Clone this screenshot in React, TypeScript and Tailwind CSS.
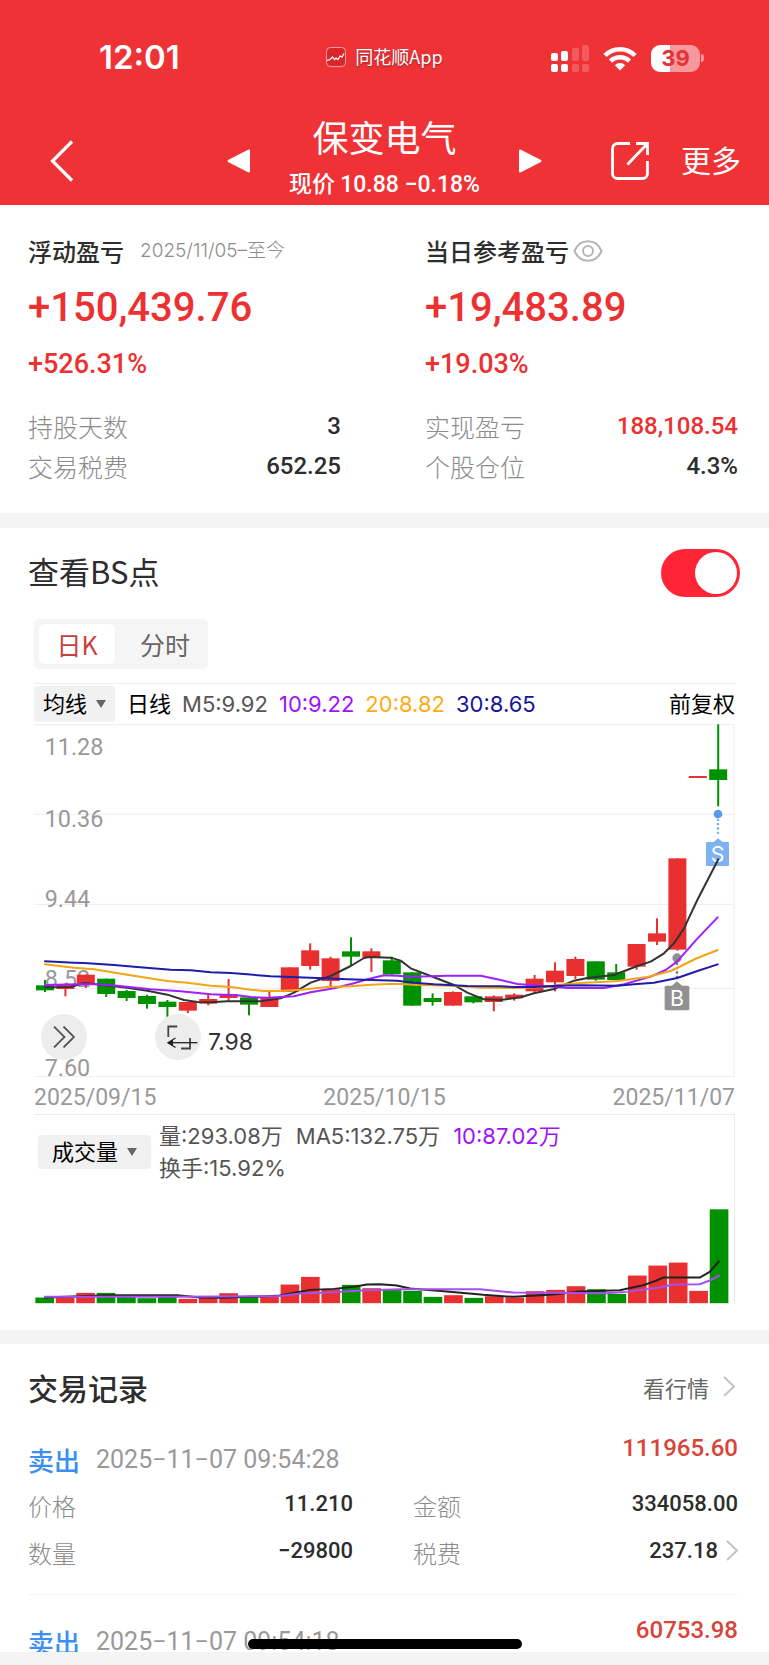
import React, { useState } from 'react';
import clsx from 'clsx';

type Candle = {
  up: boolean;
  body: [number, number];
  wick: [number, number];
  volume: number;
};

type TradeField = {
  label: string;
  value: string;
  link?: boolean;
};

type TradeRecord = {
  side: string;
  time: string;
  profit: string;
  fields: TradeField[];
};

const c = (
  up: boolean,
  top: number,
  bottom: number,
  high: number,
  low: number,
  volume: number
): Candle => ({ up, body: [top, bottom], wick: [high, low], volume });

// Body and wick are chart y values, volume is the bar height
const candles: Candle[] = [
  c(false, 796, 811, 780, 816, 17),
  c(true, 795, 807, 790, 829, 17),
  c(true, 764, 791, 764, 804, 31),
  c(false, 776, 822, 776, 831, 31),
  c(false, 813, 834, 810, 843, 19),
  c(false, 828, 852, 824, 866, 15),
  c(false, 845, 861, 840, 899, 19),
  c(true, 846, 872, 846, 879, 13),
  c(true, 837, 851, 825, 856, 17),
  c(true, 822, 834, 777, 843, 30),
  c(false, 832, 854, 832, 886, 20),
  c(true, 834, 861, 814, 861, 19),
  c(true, 742, 815, 742, 815, 56),
  c(true, 691, 738, 670, 749, 79),
  c(true, 715, 783, 710, 798, 42),
  c(false, 694, 710, 652, 738, 55),
  c(true, 694, 713, 685, 756, 45),
  c(false, 721, 763, 710, 768, 41),
  c(false, 757, 857, 757, 857, 37),
  c(false, 834, 846, 820, 857, 19),
  c(true, 816, 857, 814, 857, 24),
  c(false, 829, 847, 829, 850, 16),
  c(true, 829, 846, 826, 874, 21),
  c(true, 824, 835, 820, 842, 17),
  c(true, 776, 814, 765, 819, 36),
  c(true, 752, 787, 727, 814, 40),
  c(true, 717, 768, 710, 777, 51),
  c(false, 724, 779, 724, 782, 42),
  c(false, 757, 780, 732, 780, 28),
  c(true, 672, 740, 672, 749, 83),
  c(true, 640, 665, 595, 675, 113),
  c(true, 415, 689, 415, 692, 122),
  c(true, 168, 174, 168, 174, 37),
  c(false, 148, 180, 13, 259, 282),
];

const priceLines = {
  ma30: '33,724 120,728 150,729 240,735 300,740 410,749 470,751 530,757 590,759 640,763 710,769 790,772 870,775 940,778 1038,781 1090,782 1140,788 1200,793 1300,798 1400,799 1440,801 1500,801 1570,797 1640,796 1750,797 1800,793 1860,788 1930,774 1990,753 2051,733',
  ma20: '33,733 120,743 180,748 270,763 400,783 460,788 530,797 590,801 650,809 690,813 730,813 800,809 880,801 950,799 1000,795 1060,792 1100,792 1150,795 1260,797 1340,803 1440,804 1540,801 1570,795 1640,789 1700,786 1750,783 1840,771 1910,753 1990,714 2051,690',
  ma10: '33,795 130,793 190,793 250,797 350,808 440,814 530,823 610,826 650,831 700,833 780,829 830,817 900,805 960,790 1000,778 1050,766 1090,767 1130,770 1190,769 1240,767 1340,767 1400,780 1450,792 1530,798 1600,804 1710,804 1770,793 1850,770 1895,750 1929,725 1990,656 2051,592',
  ma5: '33,802 110,801 150,789 200,794 280,803 340,812 400,824 450,840 490,846 530,847 580,844 680,844 740,835 780,818 830,788 890,768 950,738 990,714 1005,711 1070,713 1100,722 1130,745 1190,768 1260,795 1300,818 1350,838 1400,840 1460,832 1500,820 1560,807 1620,782 1660,774 1740,765 1810,738 1850,725 1890,700 1920,670 1950,625 1990,540 2053,418',
};

const volumeLines = {
  ma5: '33,652 200,646 250,645 430,645 500,652 560,653 650,650 730,647 770,640 830,629 900,626 960,620 1000,613 1040,612 1090,616 1130,625 1240,634 1350,644 1440,650 1560,643 1640,634 1760,630 1830,615 1865,603 1890,592 2000,592 2030,575 2058,543',
  ma10: '33,650 430,650 730,648 800,640 900,636 1000,630 1100,627 1340,627 1400,633 1440,637 1720,639 1780,635 1880,622 1920,613 2000,612 2030,601 2058,586',
};

const axisLabels = [
  { text: '11.28', y: 105 },
  { text: '10.36', y: 321 },
  { text: '9.44', y: 561 },
  { text: '8.52', y: 801 },
  { text: '7.60', y: 1069 },
];

const records: TradeRecord[] = [
  {
    side: '卖出',
    time: '2025−11−07 09:54:28',
    profit: '111965.60',
    fields: [
      { label: '价格', value: '11.210' },
      { label: '金额', value: '334058.00' },
      { label: '数量', value: '−29800' },
      { label: '税费', value: '237.18', link: true },
    ],
  },
  {
    side: '卖出',
    time: '2025−11−07 09:54:18',
    profit: '60753.98',
    fields: [],
  },
];

const UP = '#e93030';
const DOWN = '#009100';

const StatusBar: React.FC = () => (
  <div className="grid h-[116px] grid-cols-[1fr_auto_1fr] items-center text-white">
    <span className="pl-[99px] font-[Inter,sans-serif] text-[33px] font-semibold">12:01</span>
    <div className="flex items-center gap-[9px] pb-[3px] text-[18px] [text-shadow:0_1px_2px_rgba(0,0,0,0.4)]">
      <svg viewBox="0 0 20 20" className="h-5 w-5" fill="none" stroke="#fff">
        <rect x="0.5" y="0.5" width="19" height="19" rx="4" strokeOpacity="0.55" fill="#d9262b" />
        <path d="M1 13.5l3-1 2.5-2.5 2 2.5 1.5-1.5 2 1.5 2-3.5 2 1 2-3.5" strokeWidth="1.2" />
      </svg>
      <span>同花顺App</span>
    </div>
    <div className="flex items-center justify-end gap-[14px] pr-[65px]">
      <svg viewBox="0 0 38 27" className="h-[27px] w-[38px]" fill="#fff">
        <rect x="0" y="8" width="7" height="8" rx="2" />
        <rect x="10" y="6" width="7" height="10" rx="2" />
        <rect x="0" y="19" width="7" height="8" rx="2" />
        <rect x="10" y="19" width="7" height="8" rx="2" />
        <g opacity="0.2">
          <rect x="21" y="3" width="7" height="13" rx="2" />
          <rect x="31" y="0" width="7" height="16" rx="2" />
          <rect x="21" y="19" width="7" height="8" rx="2" />
          <rect x="31" y="19" width="7" height="8" rx="2" />
        </g>
      </svg>
      <svg viewBox="0 0 34 25" className="h-[25px] w-[34px]" fill="none" stroke="#fff" strokeWidth="4.6">
        <path d="M2 9.5a21 21 0 0 1 30 0" />
        <path d="M7.5 15.2a13.5 13.5 0 0 1 19 0" />
        <path d="M17 24.5l-5.2-5.3a7.4 7.4 0 0 1 10.4 0z" fill="#fff" stroke="none" />
      </svg>
      <div className="flex items-center gap-[1px]">
        <div className="h-[27px] w-[49px] rounded-[9px] bg-linear-to-r from-white from-39% to-white/50 to-39% text-center font-[Inter,sans-serif] text-[22px] leading-[27px] font-bold text-[#e23338]">
          39
        </div>
        <div className="h-2 w-[3px] rounded-r-full bg-white/50" />
      </div>
    </div>
  </div>
);

const NavBar: React.FC = () => (
  <nav className="grid h-[89px] grid-cols-[1fr_auto_1fr] items-center text-white">
    <button aria-label="返回" className="pl-[50px]">
      <svg viewBox="0 0 24 42" className="h-[42px] w-6" fill="none" stroke="#fff" strokeWidth="3.2">
        <path d="M22 1.5L2.5 21 22 40.5" />
      </svg>
    </button>
    <div className="flex w-[316px] items-center justify-between">
      <button aria-label="上一只">
        <svg viewBox="0 0 23 24" className="h-6 w-[23px]" fill="#fff" stroke="#fff" strokeWidth="2" strokeLinejoin="round">
          <path d="M22 1.5v21L1.5 12z" />
        </svg>
      </button>
      <div className="text-center">
        <h1 className="text-[36px] leading-10">保变电气</h1>
        <p className="pt-[5px] text-[23px] leading-[43px] font-medium">
          现价 <span className="font-[Roboto,sans-serif]">10.88 −0.18%</span>
        </p>
      </div>
      <button aria-label="下一只">
        <svg viewBox="0 0 23 24" className="h-6 w-[23px]" fill="#fff" stroke="#fff" strokeWidth="2" strokeLinejoin="round">
          <path d="M1 1.5v21L21.5 12z" />
        </svg>
      </button>
    </div>
    <div className="flex items-center justify-end gap-8 pr-7">
      <button aria-label="分享">
        <svg viewBox="0 0 38 38" className="h-[38px] w-[38px]" fill="none" stroke="#fff" strokeWidth="2.8">
          <path d="M19 1.5H6.5a5 5 0 0 0-5 5v25a5 5 0 0 0 5 5h25a5 5 0 0 0 5-5V19" />
          <path d="M25 1.5h11.5V13M36 2L16.5 22.5" />
        </svg>
      </button>
      <button className="pb-1 text-[30px]">更多</button>
    </div>
  </nav>
);

const ProfitColumn: React.FC<{
  title: React.ReactNode;
  total: string;
  percent: string;
  rows: { label: string; value: string; red?: boolean }[];
}> = ({ title, total, percent, rows }) => (
  <div>
    <div className="flex items-center text-[24px] leading-[34px] font-medium text-[#2d2d2d]">{title}</div>
    <p className="mt-4 font-[Roboto,sans-serif] text-[40px] leading-[48px] font-medium text-[#eb3131]">{total}</p>
    <p className="mt-[14px] font-[Roboto,sans-serif] text-[27px] leading-9 font-medium text-[#eb3131]">{percent}</p>
    <dl className="mt-6 leading-10">
      {rows.map((row) => (
        <div key={row.label} className="flex justify-between">
          <dt className="text-[25px] font-light text-[#8c8c8c]">{row.label}</dt>
          <dd
            className={clsx(
              'font-[Roboto,sans-serif] text-[24px] font-medium',
              row.red ? 'text-[#eb3131]' : 'text-[#2d2d2d]'
            )}
          >
            {row.value}
          </dd>
        </div>
      ))}
    </dl>
  </div>
);

const ProfitSummary: React.FC = () => (
  <section className="grid grid-cols-2 gap-[84px] pt-[29px] pr-[31px] pb-[27px] pl-7">
    <ProfitColumn
      title={
        <>
          浮动盈亏
          <span className="ml-4 font-[Inter,'Noto_Sans_CJK_SC',sans-serif] text-[19px] font-light text-[#8c8c8c]">
            2025/11/05–至今
          </span>
        </>
      }
      total="+150,439.76"
      percent="+526.31%"
      rows={[
        { label: '持股天数', value: '3' },
        { label: '交易税费', value: '652.25' },
      ]}
    />
    <ProfitColumn
      title={
        <>
          当日参考盈亏
          <button aria-label="隐藏金额" className="ml-1">
            <svg viewBox="0 0 30 22" className="h-[22px] w-[30px]" fill="none" stroke="#b5b5b5" strokeWidth="2">
              <path d="M1.5 11C4 5 9 1.3 15 1.3S26 5 28.5 11C26 17 21 20.7 15 20.7S4 17 1.5 11z" />
              <circle cx="15" cy="11" r="5" />
            </svg>
          </button>
        </>
      }
      total="+19,483.89"
      percent="+19.03%"
      rows={[
        { label: '实现盈亏', value: '188,108.54', red: true },
        { label: '个股仓位', value: '4.3%' },
      ]}
    />
  </section>
);

const Caret: React.FC = () => (
  <svg viewBox="0 0 10 8" className="h-2 w-[10px]" fill="#666">
    <path d="M0 0h10L5 8z" />
  </svg>
);

const PriceChart: React.FC = () => (
  <svg viewBox="0 12 2103 1060" className="block w-full">
    <g stroke="#ececec" strokeWidth="3">
      {[14, 283, 553, 805, 1070].map((y) => (
        <line key={y} x1="0" x2="2100" y1={y} y2={y} />
      ))}
      <line x1="2100" x2="2100" y1="12" y2="1070" />
    </g>
    <g fill="#999" fontSize="70" fontFamily="Roboto, sans-serif">
      {axisLabels.map((label) => (
        <text key={label.text} x="32" y={label.y}>
          {label.text}
        </text>
      ))}
    </g>
    {candles.map((candle, i) => {
      const x = 33 + i * 61.2;
      const color = candle.up ? UP : DOWN;
      return (
        <g key={i} fill={color}>
          <rect x={x - 3} y={candle.wick[0]} width="6" height={candle.wick[1] - candle.wick[0]} />
          <rect x={x - 27} y={candle.body[0]} width="54" height={candle.body[1] - candle.body[0]} />
        </g>
      );
    })}
    <g fill="#919191">
      <circle cx="1929" cy="714" r="14" />
      <path d="M1929 728v50" stroke="#777" strokeWidth="7" strokeDasharray="7 6" />
      <path d="M1913 798l16-14 16 14z" />
      <rect x="1892" y="797" width="74" height="74" rx="5" />
    </g>
    <g fill="#7fb2f3">
      <circle cx="2052" cy="282" r="13" fill="#559aef" />
      <path d="M2052 296v48" stroke="#7fb2f3" strokeWidth="7" strokeDasharray="7 6" />
      <path d="M2036 368l16-13 16 13z" />
      <rect x="2016" y="366" width="69" height="72" rx="3" />
    </g>
    <g fill="#fff" fontSize="64" fontFamily="Inter, sans-serif" textAnchor="middle">
      <text x="1929" y="858">B</text>
      <text x="2051" y="426">S</text>
    </g>
    <g fill="none" strokeWidth="6" strokeLinejoin="round" strokeLinecap="round">
      <polyline points={priceLines.ma5} stroke="#333" />
      <polyline points={priceLines.ma10} stroke="#a020ff" />
      <polyline points={priceLines.ma20} stroke="#f5a414" />
      <polyline points={priceLines.ma30} stroke="#1d1da8" />
    </g>
    <text x="522" y="990" fill="#333" fontSize="69" fontFamily="Inter, sans-serif">
      7.98
    </text>
  </svg>
);

const VolumeChart: React.FC = () => (
  <svg viewBox="0 380 2103 289" className="block w-full">
    {candles.map((candle, i) => (
      <rect
        key={i}
        x={4 + i * 61.4}
        y={669 - candle.volume}
        width="56"
        height={candle.volume}
        fill={candle.up ? UP : DOWN}
      />
    ))}
    <g fill="none" strokeWidth="6" strokeLinejoin="round" strokeLinecap="round">
      <polyline points={volumeLines.ma5} stroke="#222" />
      <polyline points={volumeLines.ma10} stroke="#a64ff0" />
    </g>
  </svg>
);

const ChartSection: React.FC = () => {
  const [showPoints, setShowPoints] = useState(true);
  const [tab, setTab] = useState('day');

  const tabClass = (name: string) =>
    clsx('rounded-md text-[25px]', tab === name ? 'bg-white text-[#c9403a]' : 'text-[#666]');

  return (
    <section className="pb-[26px]">
      <label className="flex items-center justify-between pt-[21px] pr-[29px] pl-7 text-[31px] text-[#2d2d2d]">
        <span className="pb-1 leading-10">查看BS点</span>
        <input
          type="checkbox"
          checked={showPoints}
          onChange={(e) => setShowPoints(e.target.checked)}
          className="flex h-12 w-[79px] appearance-none items-center justify-start rounded-full bg-gray-300 px-[3px] before:block before:h-[42px] before:w-[42px] before:rounded-full before:bg-white before:content-[''] checked:justify-end checked:bg-[#ff2436]"
        />
      </label>

      <div className="px-[34px]">
        <div className="mt-[22px] grid h-[50px] w-[174px] grid-cols-[76px_1fr] gap-3 rounded-md bg-[#f5f5f5] p-[5px] leading-9">
          <button className={tabClass('day')} onClick={() => setTab('day')}>
            日K
          </button>
          <button className={tabClass('time')} onClick={() => setTab('time')}>
            分时
          </button>
        </div>

        <div className="mt-[14px] flex h-[41px] items-center border-t border-[#efefef] font-[Inter,'Noto_Sans_CJK_SC',sans-serif] text-[22px] text-black">
          <button className="flex h-9 w-[81px] items-center justify-center gap-[9px] rounded-[3px] bg-[#f1f1f1]">
            均线
            <Caret />
          </button>
          <span className="ml-3">日线</span>
          <div className="ml-[11px] flex gap-[11px]">
            <span className="text-[#555]">M5:9.92</span>
            <span className="text-[#a010ff]">10:9.22</span>
            <span className="text-[#ffac14]">20:8.82</span>
            <span className="text-[#14149c]">30:8.65</span>
          </div>
          <span className="ml-auto">前复权</span>
        </div>

        <div className="relative">
          <PriceChart />
          <button
            aria-label="展开"
            className="absolute bottom-[17px] left-[7px] flex h-[46px] w-[46px] items-center justify-center rounded-full bg-[#ededed]"
          >
            <svg viewBox="0 0 22 22" className="h-[22px] w-[22px]" fill="none" stroke="#555" strokeWidth="1.8">
              <path d="M1 0.5L11.5 11 1 21.5M10.5 0.5L21 11 10.5 21.5" />
            </svg>
          </button>
          <button
            aria-label="全屏"
            className="absolute bottom-[17px] left-[121px] flex h-[46px] w-[46px] items-center justify-center rounded-full bg-[#ededed]"
          >
            <svg viewBox="0 0 46 46" className="h-[46px] w-[46px]" fill="none" stroke="#444" strokeWidth="1.8">
              <path d="M13.3 23V12.5h9M26 34.5h9V24" />
              <path d="M13 28.7h29.5" stroke="#222" strokeWidth="1.3" />
              <path d="M20.5 24L13 28.7l7.5 4.8" stroke="#222" strokeWidth="1.3" />
              <path d="M13 28.7l5-3v6z" fill="#222" stroke="none" />
            </svg>
          </button>
        </div>
        <div className="flex justify-between pt-1 font-[Roboto,sans-serif] text-[23px] leading-[33px] text-[#999]">
          <span>2025/09/15</span>
          <span>2025/10/15</span>
          <span>2025/11/07</span>
        </div>

        <div className="border-t border-r border-[#ececec] font-[Inter,'Noto_Sans_CJK_SC',sans-serif] text-[22px] text-[#555]">
          <div className="flex items-start pb-[23px] pl-1">
            <button className="mt-5 flex h-[34px] w-[113px] items-center justify-center gap-[9px] rounded-[3px] bg-[#f1f1f1] text-black">
              成交量
              <Caret />
            </button>
            <div className="ml-2 pt-[5px] leading-8">
              <div className="flex gap-[13px]">
                <span>量:293.08万</span>
                <span>MA5:132.75万</span>
                <span className="text-[#a010ff]">10:87.02万</span>
              </div>
              <div>换手:15.92%</div>
            </div>
          </div>
          <VolumeChart />
        </div>
      </div>
    </section>
  );
};

const RightChevron: React.FC = () => (
  <svg viewBox="0 0 12 21" className="h-[21px] w-3" fill="none" stroke="#c4c4c4" strokeWidth="2">
    <path d="M1 1l10 9.5L1 20" />
  </svg>
);

const Field: React.FC<TradeField> = ({ label, value, link }) => (
  <div className="flex h-11 justify-between leading-10">
    <dt className="pt-[2px] text-[24px] font-light text-[#8c8c8c]">{label}</dt>
    <dd className="flex h-10 items-center gap-2 font-[Roboto,sans-serif] text-[22px] font-medium text-[#2d2d2d]">
      {value}
      {link && (
        <button aria-label="税费明细">
          <RightChevron />
        </button>
      )}
    </dd>
  </div>
);

const TradeRecords: React.FC = () => (
  <section className="pt-[23px] pr-[31px] pl-7">
    <div className="mb-[6px] flex items-center justify-between leading-10">
      <h2 className="text-[30px] font-medium text-[#2d2d2d]">交易记录</h2>
      <a href="#quote" className="flex items-center gap-[14px] pr-[3px] text-[22px] text-[#666]">
        看行情
        <RightChevron />
      </a>
    </div>
    {records.map((record) => (
      <article key={record.time} className="border-b border-[#f4f4f4] pt-[17px] pb-[19px]">
        <div className="flex items-start justify-between leading-9">
          <div className="flex items-center gap-4 pt-3">
            <span className="text-[26px] font-medium text-[#3c8ef2]">{record.side}</span>
            <time className="font-[Roboto,sans-serif] text-[25px] text-[#999]">{record.time}</time>
          </div>
          <span className="font-[Roboto,sans-serif] text-[24px] font-medium text-[#d8433a]">{record.profit}</span>
        </div>
        <dl className="mt-[6px] grid grid-cols-2 gap-x-[60px] gap-y-[3px]">
          {record.fields.map((field) => (
            <Field key={field.label} {...field} />
          ))}
        </dl>
      </article>
    ))}
  </section>
);

export default function App() {
  return (
    <div className="relative flex h-screen flex-col overflow-hidden bg-[#f4f4f4] font-['Noto_Sans_CJK_SC',sans-serif]">
      <header className="shrink-0 bg-[#ef3236]">
        <StatusBar />
        <NavBar />
      </header>
      <main className="flex-1 overflow-hidden bg-white">
        <ProfitSummary />
        <div className="h-[15px] bg-[#f4f4f4]" />
        <ChartSection />
        <div className="h-[14px] bg-[#f4f4f4]" />
        <TradeRecords />
      </main>
      <div className="h-[13px] shrink-0" />
      <div className="absolute bottom-4 left-1/2 h-[10px] w-[274px] -translate-x-1/2 rounded-full bg-black" />
    </div>
  );
}
